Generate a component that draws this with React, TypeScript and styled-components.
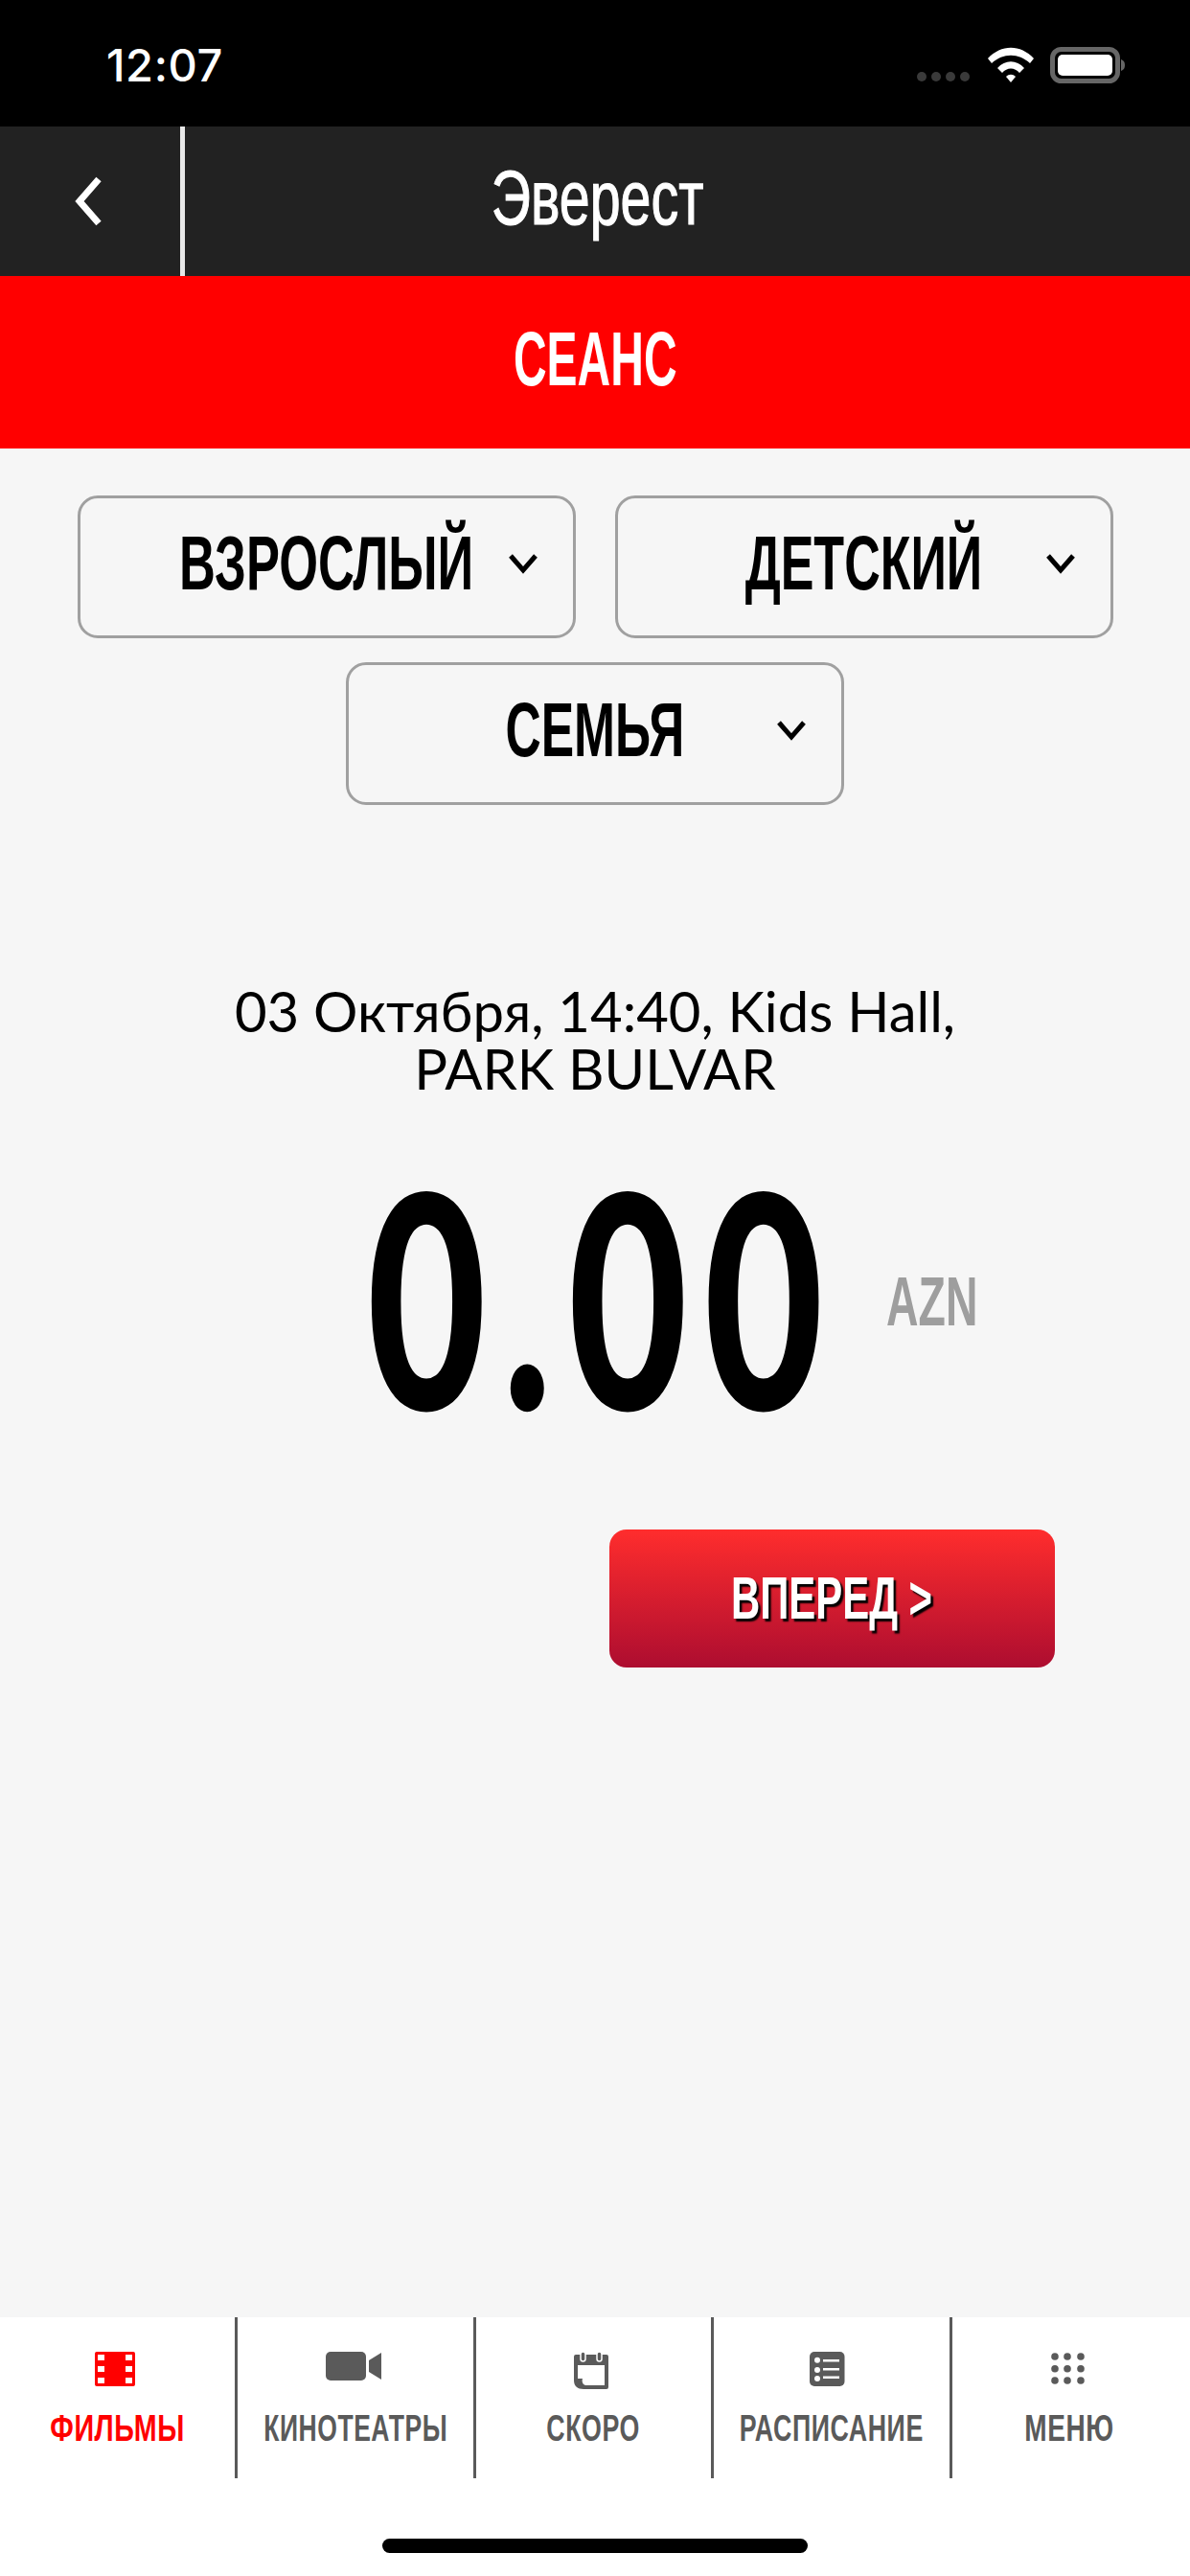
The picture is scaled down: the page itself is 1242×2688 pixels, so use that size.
import React from "react";
import styled, { createGlobalStyle } from "styled-components";

const Global = createGlobalStyle`
  html, body { margin: 0; padding: 0; background: #f6f6f6; }
  * { box-sizing: border-box; }
`;
const sans = `"Liberation Sans", Arial, sans-serif`;

const Page = styled.div`
  width: 1242px; height: 2688px; display: flex; flex-direction: column; background: #f6f6f6; overflow: hidden;
  font-family: ${sans};
`;
const Squeeze = styled.span<{ $x: number; $origin?: string }>`
  display: inline-block; white-space: nowrap; transform: scaleX(${p => p.$x}); transform-origin: ${p => p.$origin ?? "center"};
`;
const StatusBar = styled.div`
  height: 132px; background: #000; display: flex; align-items: flex-start; justify-content: space-between;
  padding: 49px 65px 0 111px;
`;
const Clock = styled.div`
  font-family: Inter, sans-serif; font-weight: 500; font-size: 47px; line-height: 38px; color: #fff; letter-spacing: 0.6px;
`;
const StatusIcons = styled.div`display: flex;`;
const Header = styled.div`
  height: 156px; background: #222; display: flex; align-items: stretch; color: #fff;
`;
const BackCell = styled.div`
  width: 193px; border-right: 5px solid #e8e8e8; display: flex; align-items: center; padding-left: 76px;
`;
const Title = styled.div`
  flex: 1; text-align: center; font-size: 80px; line-height: 149px; padding-right: 187px; -webkit-text-stroke: 1.2px #fff;
`;
const Band = styled.div`
  height: 180px; background: #f00; color: #fff; text-align: center; font-size: 80px; line-height: 174px; font-weight: 700;
`;
const Main = styled.div`flex: 1; display: flex; flex-direction: column; padding-top: 49px;`;
const Selects = styled.div`
  display: flex; flex-wrap: wrap; justify-content: center; gap: 25px 41px; padding: 0 80px;
`;
const Select = styled.div`
  width: 520px; height: 149px; border: 3px solid #a0a0a0; border-radius: 21px; position: relative;
  text-align: center; font-size: 80px; font-weight: 700; line-height: 135px; color: #000;
`;
const Caret = styled.svg`
  position: absolute; right: 36px; top: 57px; width: 32px; height: 22px;
`;
const Info = styled.div`
  margin-top: 185px; text-align: center; font-family: Lato, sans-serif; font-weight: 400; font-size: 58px; line-height: 60px; color: #000;
`;
const PriceRow = styled.div`
  margin-top: 86px; height: 240px; display: flex; align-items: center; padding-left: 383px;
`;
const Amount = styled.div`
  width: 470px; font-family: Lato, sans-serif; font-size: 311px; font-weight: 900; line-height: 240px; letter-spacing: 25px; color: #000;
`;
const Currency = styled.div`
  margin-left: 72px; margin-top: 14px; font-size: 72px; font-weight: 700; color: #9e9e9e; line-height: 72px;
`;
const NextWrap = styled.div`margin-top: 125px; display: flex; justify-content: flex-end; padding-right: 141px;`;
const NextButton = styled.div`
  width: 465px; height: 144px; border-radius: 18px; background: linear-gradient(#ff2d2d, #ad0d30);
  color: #fff; font-size: 63px; font-weight: 700; text-align: center; line-height: 143px;
  text-shadow: 4px 3px 2px #000;
`;
const TabArea = styled.div`height: 270px; background: #fff; display: flex; flex-direction: column;`;
const Tabs = styled.div`height: 168px; display: flex;`;
const Tab = styled.div<{ $active?: boolean; $last?: boolean }>`
  flex: 0 0 20%; min-width: 0; border-right: ${p => (p.$last ? "none" : "3px solid #5a5a5a")};
  color: ${p => (p.$active ? "#f00" : "#5a5a5a")}; display: flex; flex-direction: column; align-items: center;
  padding: 36px ${p => (p.$last ? 8 : 5)}px 0 0;
`;
const TabIcon = styled.svg`width: 60px; height: 40px; display: block; overflow: visible; flex: none;`;
const TabLabel = styled.div`
  margin: 18px 0 0 5px; font-size: 39px; line-height: 44px; font-weight: 700; letter-spacing: 0.8px; white-space: nowrap;
`;
const Home = styled.div`
  width: 444px; height: 15px; border-radius: 8px; background: #000; margin: 63px auto 0;
`;

const Chev = () => (
  <Caret viewBox="0 0 32 22"><path d="M3 3 L16 18 L29 3" fill="none" stroke="#000" strokeWidth="5" /></Caret>
);

export default function App() {
  return (
    <Page>
      <Global />
      <StatusBar>
        <Clock>12:07</Clock>
        <StatusIcons>
          <svg width="220" height="40" viewBox="0 0 220 40">
            <g fill="#3a3a3a">
              <circle cx="5" cy="31" r="5" /><circle cx="20" cy="31" r="5" /><circle cx="35" cy="31" r="5" /><circle cx="50" cy="31" r="5" />
            </g>
            <g fill="#fff">
              <path d="M74 12 C88 -3 108 -3 122 12 L118 17 C106 6 90 6 78 17 Z" />
              <path d="M84 22 C92 13 104 13 112 22 L107 27 C102 21 94 21 89 27 Z" />
              <path d="M93 31 C96 28 100 28 103 31 L98 37 Z" />
            </g>
            <rect x="141.5" y="2.5" width="68" height="33" rx="9" fill="none" stroke="#666" strokeWidth="5" />
            <rect x="147" y="8" width="57" height="22" rx="5" fill="#fff" />
            <path d="M213 13 C216 14 217 16 217 19 C217 22 216 24 213 25 Z" fill="#666" />
          </svg>
        </StatusIcons>
      </StatusBar>
      <Header>
        <BackCell>
          <svg width="32" height="52" viewBox="0 0 32 52"><path d="M27 3 L7 26 L27 49" fill="none" stroke="#fff" strokeWidth="7" /></svg>
        </BackCell>
        <Title><Squeeze $x={0.717}>Эверест</Squeeze></Title>
      </Header>
      <Band><Squeeze $x={0.6}>СЕАНС</Squeeze></Band>
      <Main>
        <Selects>
          <Select><Squeeze $x={0.655}>ВЗРОСЛЫЙ</Squeeze><Chev /></Select>
          <Select><Squeeze $x={0.65}>ДЕТСКИЙ</Squeeze><Chev /></Select>
          <Select><Squeeze $x={0.645}>СЕМЬЯ</Squeeze><Chev /></Select>
        </Selects>
        <Info>03 Октября, 14:40, Kids Hall,<br />PARK BULVAR</Info>
        <PriceRow>
          <Amount><Squeeze $x={0.69} $origin="left">0.00</Squeeze></Amount>
          <Currency><Squeeze $x={0.645} $origin="left">AZN</Squeeze></Currency>
        </PriceRow>
        <NextWrap><NextButton><Squeeze $x={0.665}>ВПЕРЕД &gt;</Squeeze></NextButton></NextWrap>
      </Main>
      <TabArea>
        <Tabs>
          <Tab $active>
            <TabIcon viewBox="0 0 60 40">
              <rect x="9" y="0" width="42" height="36" rx="2" fill="#f00" />
              <g fill="#fff">
                {[3, 15, 27].map(y => (
                  <React.Fragment key={y}>
                    <rect x="12" y={y} width="7" height="6" /><rect x="41" y={y} width="7" height="6" />
                  </React.Fragment>
                ))}
              </g>
            </TabIcon>
            <TabLabel><Squeeze $x={0.735}>ФИЛЬМЫ</Squeeze></TabLabel>
          </Tab>
          <Tab>
            <TabIcon viewBox="0 0 60 40">
              <rect x="1" y="0" width="42" height="30" rx="5" fill="#5a5a5a" />
              <path d="M46 9 L59 1 V29 L46 21 Z" fill="#5a5a5a" />
            </TabIcon>
            <TabLabel><Squeeze $x={0.68}>КИНОТЕАТРЫ</Squeeze></TabLabel>
          </Tab>
          <Tab>
            <TabIcon viewBox="0 0 60 40">
              <g transform="translate(2 0)">
                <path d="M12 3 H44 a2 2 0 0 1 2 2 V37 a2 2 0 0 1 -2 2 H20 C14 39 10 36 10 30 V5 a2 2 0 0 1 2 -2 Z M14 14 V28 H19 C18 31 19 34 22 35 H42 V14 Z" fill="#5a5a5a" fillRule="evenodd" />
                <rect x="17" y="0" width="5" height="10" rx="2.5" fill="#5a5a5a" stroke="#fff" strokeWidth="1.5" />
                <rect x="34" y="0" width="5" height="10" rx="2.5" fill="#5a5a5a" stroke="#fff" strokeWidth="1.5" />
              </g>
            </TabIcon>
            <TabLabel><Squeeze $x={0.687}>СКОРО</Squeeze></TabLabel>
          </Tab>
          <Tab>
            <TabIcon viewBox="0 0 60 40">
              <rect x="10" y="0" width="36.5" height="36" rx="5" fill="#5a5a5a" />
              <g fill="#fff">
                <circle cx="18" cy="8.7" r="3" /><circle cx="18" cy="19" r="3" /><circle cx="18" cy="28" r="3" />
                <rect x="24" y="8" width="17" height="2.5" /><rect x="24" y="17" width="17" height="2.5" /><rect x="24" y="25.5" width="17" height="2.5" />
              </g>
            </TabIcon>
            <TabLabel><Squeeze $x={0.687}>РАСПИСАНИЕ</Squeeze></TabLabel>
          </Tab>
          <Tab $last>
            <TabIcon viewBox="0 0 60 40">
              <g fill="#5a5a5a">
                {[5, 17.7, 30].map(y => [17, 30, 44].map(x => <circle key={`${x}-${y}`} cx={x} cy={y} r="3.8" />))}
              </g>
            </TabIcon>
            <TabLabel><Squeeze $x={0.718}>МЕНЮ</Squeeze></TabLabel>
          </Tab>
        </Tabs>
        <Home />
      </TabArea>
    </Page>
  );
}
